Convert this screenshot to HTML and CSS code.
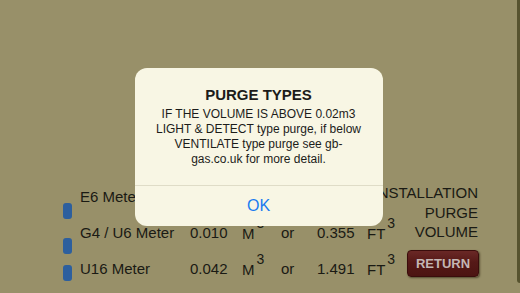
FILE: index.html
```html
<!DOCTYPE html>
<html lang="en">
  <head>
    <meta charset="UTF-8" />
    <meta name="viewport" content="width=device-width, initial-scale=1.0" />
    <title>Purge Volume</title>
    <link rel="stylesheet" href="styles.css">
  </head>
  <body>
    <div class="screen">
      <div class="app">
        <main class="meters">
          <div class="markers">
            <span class="marker"></span>
            <span class="marker"></span>
            <span class="marker"></span>
          </div>
          <div class="table">
            <div class="heading">INSTALLATION<br />PURGE<br />VOLUME</div>

            <span class="name">E6 Meter</span>
            <span></span>
            <span></span>
            <span></span>
            <span></span>
            <span></span>

            <span class="name">G4 / U6 Meter</span>
            <span>0.010</span>
            <span>M<sup>3</sup></span>
            <span>or</span>
            <span>0.355</span>
            <span>FT<sup>3</sup></span>

            <span class="name">U16 Meter</span>
            <span>0.042</span>
            <span>M<sup>3</sup></span>
            <span>or</span>
            <span>1.491</span>
            <span>FT<sup>3</sup></span>
            <button class="return">RETURN</button>
          </div>
        </main>

        <div class="overlay">
          <div class="alert">
            <div class="alert-body">
              <h2>PURGE TYPES</h2>
              <p>
                IF THE VOLUME IS ABOVE 0.02m3 LIGHT &amp; DETECT type purge,
                if below VENTILATE type purge see gb-gas.co.uk for more detail.
              </p>
            </div>
            <button class="ok">OK</button>
          </div>
        </div>
      </div>
      <div class="edge"></div>
    </div>
  </body>
</html>
```

FILE: styles.css
```css
body {
  margin: 0;
  font-family: "Liberation Sans", Arial, sans-serif;
  background-color: #989069;
  color: #1a1a14;
}
.screen {
  display: flex;
  width: 520px;
  height: 293px;
  overflow: hidden;
}
.app {
  flex: 1;
  position: relative;
}
.edge {
  width: 3px;
  height: 283px;
  background-color: #57532f;
  border-bottom-left-radius: 3px;
}
.meters {
  display: flex;
  gap: 8px;
  padding: 179px 0 0 63px;
}
.markers {
  display: flex;
  flex-direction: column;
  width: 9px;
  padding-top: 24px;
}
.marker {
  height: 16px;
  border-radius: 3px;
  background-color: #2d5f9e;
}
.marker:nth-child(2) {
  margin-top: 19px;
}
.marker:nth-child(3) {
  margin-top: 11px;
}
.table {
  display: grid;
  grid-template-columns: 110px 52px 39px 36px 50px 40px 72px;
  grid-template-rows: repeat(3, 36px);
  align-items: center;
  font-size: 15px;
  line-height: 18px;
  white-space: nowrap;
}
.table sup {
  font-size: 14px;
  line-height: 0;
  vertical-align: 11px;
  margin-left: 2px;
}
.heading {
  grid-column: 7;
  grid-row: 1 / span 2;
  align-self: start;
  justify-self: end;
  margin: 4px 1px 0 0;
  text-align: right;
  line-height: 19.5px;
}
.return {
  align-self: start;
  width: 72px;
  height: 27px;
  margin-top: -1px;
  padding: 0;
  font-family: inherit;
  font-size: 13px;
  font-weight: bold;
  color: #c4b6b4;
  background: linear-gradient(#6a2826, #551917 45%, #4c1412);
  border: 1px solid #3a0d0c;
  border-radius: 4px;
  box-shadow: 1px 1px 2px rgba(40, 30, 10, 0.6);
}
.overlay {
  position: absolute;
  top: 0;
  left: 0;
  right: 0;
  bottom: 0;
  display: flex;
  align-items: center;
  justify-content: center;
}
.alert {
  width: 248px;
  height: 158px;
  display: flex;
  flex-direction: column;
  background-color: #f8f6e4;
  border-radius: 12px;
  color: #1c1c1a;
  text-align: center;
}
.alert-body {
  flex: 1;
  padding: 18px 18px 0;
  border-bottom: 1px solid #dfdcc7;
}
.alert h2 {
  margin: 0 0 3px;
  font-size: 15px;
  line-height: 18px;
}
.alert p {
  margin: 0;
  font-size: 12px;
  line-height: 15px;
}
.ok {
  height: 40px;
  padding: 0;
  border: none;
  background: none;
  font-family: inherit;
  font-size: 16px;
  color: #1a7cf0;
}
```
